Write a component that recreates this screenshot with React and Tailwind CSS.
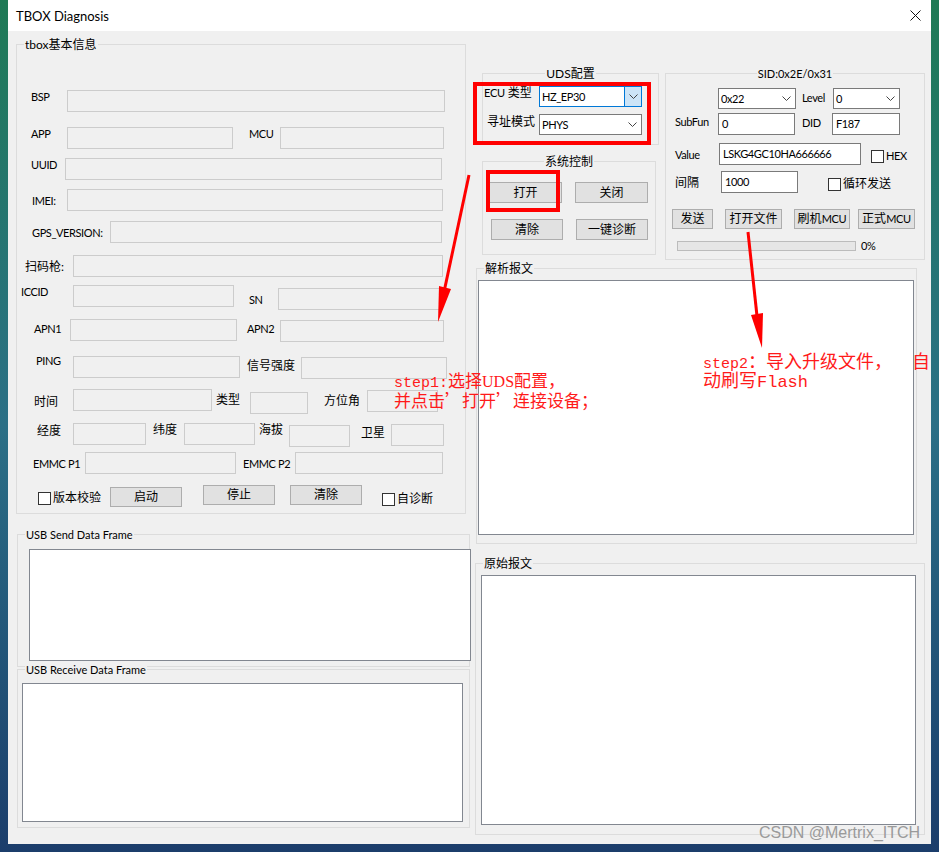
import React from 'react';

// latin text in the dialog is narrower than Lato at 12px
const EN = 'text-[11px] tracking-[-0.4px]';

const Lbl = ({ className = '', en, children }) => (
  <span className={`shrink-0 whitespace-nowrap leading-[14px] ${en ? EN : ''} ${className}`}>{children}</span>
);

// disabled text box (left panel)
const Off = ({ className = '' }) => (
  <div className={`shrink-0 h-[22px] border border-[#cccccc] bg-[#f0f0f0] ${className}`} />
);

const Edit = ({ value, className = '' }) => (
  <div className={`shrink-0 h-[22px] border border-[#7a7a7a] bg-white pl-[3px] leading-[20px] whitespace-nowrap ${EN} ${className}`}>
    {value}
  </div>
);

const Btn = ({ children, className = '' }) => (
  <button className={`shrink-0 border border-[#adadad] bg-[#e1e1e1] text-[12px] text-center whitespace-nowrap ${className}`}>
    {children}
  </button>
);

const Check = ({ label, en, className = '' }) => (
  <label className={`shrink-0 flex items-center whitespace-nowrap ${className}`}>
    <span className="w-[13px] h-[13px] border border-[#333333] bg-white" />
    <span className={`ml-[2px] leading-[14px] ${en ? EN : ''}`}>{label}</span>
  </label>
);

const Chevron = () => (
  <svg width="9" height="5" viewBox="0 0 9 5">
    <path d="M0.5 0.5 L4.5 4.5 L8.5 0.5" fill="none" stroke="#444" strokeWidth="1" />
  </svg>
);

const Combo = ({ value, className = '', focused }) => (
  <div
    className={`shrink-0 h-[21px] flex bg-white border ${
      focused ? 'border-[#0078d7]' : 'border-[#7a7a7a]'
    } ${className}`}
  >
    <span className={`flex-1 pl-[2px] leading-[19px] whitespace-nowrap ${EN}`}>{value}</span>
    <span
      className={`w-[17px] flex items-center justify-center ${
        focused ? 'bg-[#cce4f7] border-l border-[#0078d7]' : ''
      }`}
    >
      <Chevron />
    </span>
  </div>
);

const Group = ({ title, center, en, className = '', children }) => (
  <div className={`shrink-0 border border-[#dcdcdc] ${className}`}>
    <div className={`flex h-[15px] -mt-[8px] ${center ? 'justify-center' : 'pl-[7px]'}`}>
      <span className={`bg-[#f0f0f0] px-[1px] leading-[15px] whitespace-nowrap ${en ? 'text-[11px]' : ''}`}>{title}</span>
    </div>
    {children}
  </div>
);

const Row = ({ className = '', children }) => (
  <div className={`flex items-start h-[22px] ${className}`}>{children}</div>
);

const TboxInfo = () => (
  <Group title="tbox基本信息" className="ml-[8px] mt-[13px] w-[450px] h-[470px]">
    <Row className="mt-[38px]">
      <Lbl en className="ml-[14px] w-[36px]">BSP</Lbl>
      <Off className="w-[378px]" />
    </Row>
    <Row className="mt-[15px]">
      <Lbl en className="ml-[14px] w-[36px]">APP</Lbl>
      <Off className="w-[166px]" />
      <Lbl en className="ml-[16px] w-[31px]">MCU</Lbl>
      <Off className="w-[164px]" />
    </Row>
    <Row className="mt-[9px]">
      <Lbl en className="ml-[14px] w-[34px]">UUID</Lbl>
      <Off className="w-[377px]" />
    </Row>
    <Row className="mt-[9px]">
      <Lbl en className="ml-[15px] w-[35px] mt-[5px]">IMEI:</Lbl>
      <Off className="w-[376px]" />
    </Row>
    <Row className="mt-[10px]">
      <Lbl en className="ml-[15px] w-[78px] mt-[5px]">GPS_VERSION:</Lbl>
      <Off className="w-[332px]" />
    </Row>
    <Row className="mt-[12px]">
      <Lbl className="ml-[8px] w-[48px] mt-[5px]">扫码枪:</Lbl>
      <Off className="w-[370px]" />
    </Row>
    <Row className="mt-[8px]">
      <Lbl en className="ml-[4px] w-[52px]">ICCID</Lbl>
      <Off className="w-[161px]" />
      <Lbl en className="ml-[15px] w-[29px] mt-[8px]">SN</Lbl>
      <Off className="w-[164px] mt-[3px]" />
    </Row>
    <Row className="mt-[12px]">
      <Lbl en className="ml-[17px] w-[36px] mt-[3px]">APN1</Lbl>
      <Off className="w-[167px]" />
      <Lbl en className="ml-[10px] w-[33px] mt-[3px]">APN2</Lbl>
      <Off className="w-[164px] mt-[1px]" />
    </Row>
    <Row className="mt-[13px]">
      <Lbl en className="ml-[19px] w-[37px]">PING</Lbl>
      <Off className="w-[167px] mt-[2px]" />
      <Lbl className="ml-[7px] w-[54px] mt-[5px]">信号强度</Lbl>
      <Off className="w-[146px] mt-[3px]" />
    </Row>
    <Row className="mt-[13px]">
      <Lbl className="ml-[17px] w-[39px] mt-[6px]">时间</Lbl>
      <Off className="w-[139px]" />
      <Lbl className="ml-[4px] w-[34px] mt-[4px]">类型</Lbl>
      <Off className="w-[58px] mt-[3px]" />
      <Lbl className="ml-[16px] w-[43px] mt-[5px]">方位角</Lbl>
      <Off className="w-[71px] mt-[1px]" />
    </Row>
    <Row className="mt-[12px]">
      <Lbl className="ml-[20px] w-[36px] mt-[1px]">经度</Lbl>
      <Off className="w-[73px]" />
      <Lbl className="ml-[7px] w-[31px]">纬度</Lbl>
      <Off className="w-[71px]" />
      <Lbl className="ml-[4px] w-[30px]">海拔</Lbl>
      <Off className="w-[61px] mt-[2px]" />
      <Lbl className="ml-[11px] w-[30px] mt-[3px]">卫星</Lbl>
      <Off className="w-[53px] mt-[1px]" />
    </Row>
    <Row className="mt-[7px]">
      <Lbl en className="ml-[16px] w-[52px] mt-[5px]">EMMC P1</Lbl>
      <Off className="w-[151px]" />
      <Lbl en className="ml-[7px] w-[52px] mt-[5px]">EMMC P2</Lbl>
      <Off className="w-[148px]" />
    </Row>
    <Row className="mt-[11px]">
      <Check label="版本校验" className="ml-[21px] mt-[6px] w-[72px]" />
      <Btn className="w-[72px] h-[20px] mt-[2px] leading-[18px]">启动</Btn>
      <Btn className="ml-[21px] w-[72px] h-[20px] leading-[18px]">停止</Btn>
      <Btn className="ml-[15px] w-[72px] h-[20px] leading-[18px]">清除</Btn>
      <Check label="自诊断" className="ml-[20px] mt-[7px]" />
    </Row>
  </Group>
);

const SidPanel = () => (
  <Group title="SID:0x2E/0x31" center en className="ml-[6px] mt-[42px] w-[260px] h-[187px]">
    <div className="flex items-start mt-[7px] h-[21px]">
      <Combo value="0x22" className="ml-[52px] w-[78px]" />
      <Lbl en className="ml-[6px] w-[31px] mt-[3px]">Level</Lbl>
      <Combo value="0" className="w-[67px]" />
    </div>
    <Row className="mt-[4px]">
      <Lbl en className="ml-[9px] w-[43px] mt-[2px]">SubFun</Lbl>
      <Edit value="0" className="w-[77px]" />
      <Lbl en className="ml-[7px] w-[30px] mt-[3px]">DID</Lbl>
      <Edit value="F187" className="w-[68px]" />
    </Row>
    <Row className="mt-[8px]">
      <Lbl en className="ml-[9px] w-[44px] mt-[5px]">Value</Lbl>
      <Edit value="LSKG4GC10HA666666" className="w-[142px]" />
      <Check label="HEX" en className="ml-[10px] mt-[6px]" />
    </Row>
    <Row className="mt-[6px]">
      <Lbl className="ml-[9px] w-[46px] mt-[5px]">间隔</Lbl>
      <Edit value="1000" className="w-[77px]" />
      <Check label="循环发送" className="ml-[30px] mt-[6px]" />
    </Row>
    <div className="flex items-start mt-[16px] h-[20px]">
      <Btn className="ml-[6px] w-[41px] h-[20px] leading-[18px]">发送</Btn>
      <Btn className="ml-[12px] w-[57px] h-[20px] leading-[18px]">打开文件</Btn>
      <Btn className="ml-[12px] w-[56px] h-[20px] leading-[18px]">
        刷机<span className="text-[11px] tracking-[-0.3px]">MCU</span>
      </Btn>
      <Btn className="ml-[8px] w-[57px] h-[20px] leading-[18px]">
        正式<span className="text-[11px] tracking-[-0.3px]">MCU</span>
      </Btn>
    </div>
    <div className="flex items-center mt-[12px] h-[10px]">
      <div className="ml-[11px] w-[179px] h-[10px] border border-[#bcbcbc] bg-[#e6e6e6]" />
      <span className={`ml-[5px] leading-[10px] ${EN}`}>0%</span>
    </div>
  </Group>
);

export default function App() {
  return (
    <div className="relative w-[939px] h-[852px] overflow-hidden bg-linear-to-b from-[#1f7a55] via-[#2b6f86] to-[#1b3d6b]">
      <div className="ml-[8px] w-[923px] h-[844px] flex flex-col bg-[#f0f0f0] text-[12px] text-black font-['Lato','Noto_Sans_CJK_SC',sans-serif]">
        {/* title bar */}
        <div className="h-[31px] shrink-0 bg-white flex items-center justify-between pl-[8px] pr-[10px]">
          <span className="text-[13px] leading-[16px]">TBOX Diagnosis</span>
          <svg width="11" height="11" viewBox="0 0 11 11">
            <path d="M0.5 0.5 L10.5 10.5 M10.5 0.5 L0.5 10.5" stroke="#111" strokeWidth="1" />
          </svg>
        </div>

        <div className="flex-1 flex">
          {/* left column */}
          <div className="w-[463px] shrink-0 flex flex-col">
            <TboxInfo />
            <Group title="USB Send Data Frame" en className="ml-[9px] mt-[20px] w-[453px] h-[133px]">
              <div className="ml-[11px] mt-[7px] w-[442px] h-[112px] bg-white border border-[#828790]" />
            </Group>
            <Group title="USB Receive Data Frame" en className="ml-[9px] mt-[2px] w-[453px] h-[159px]">
              <div className="ml-[4px] mt-[6px] w-[441px] h-[139px] bg-white border border-[#828790]" />
            </Group>
          </div>

          {/* right column */}
          <div className="flex flex-col">
            <div className="flex items-start">
              <div className="ml-[11px] flex flex-col">
                <Group title="UDS配置" center className="mt-[42px] w-[177px] h-[72px]">
                  <div className="flex items-start mt-[5px] h-[21px]">
                    <Lbl className="ml-[1px] w-[55px]">
                      <span className="text-[11px] tracking-[-0.3px]">ECU</span> 类型
                    </Lbl>
                    <Combo value="HZ_EP30" focused className="w-[103px]" />
                  </div>
                  <div className="flex items-start mt-[7px] h-[21px]">
                    <Lbl className="ml-[4px] w-[52px] mt-[1px]">寻址模式</Lbl>
                    <Combo value="PHYS" className="w-[103px]" />
                  </div>
                </Group>
                <Group title="系统控制" center className="mt-[16px] w-[174px] h-[94px]">
                  <div className="flex mt-[13px]">
                    <Btn className="ml-[6px] w-[73px] h-[21px] leading-[19px]">打开</Btn>
                    <Btn className="ml-[13px] w-[73px] h-[21px] leading-[19px]">关闭</Btn>
                  </div>
                  <div className="flex mt-[16px]">
                    <Btn className="ml-[8px] w-[72px] h-[21px] leading-[19px]">清除</Btn>
                    <Btn className="ml-[13px] w-[72px] h-[21px] leading-[19px]">一键诊断</Btn>
                  </div>
                </Group>
              </div>
              <SidPanel />
            </div>

            <Group title="解析报文" className="ml-[5px] mt-[8px] w-[441px] h-[276px]">
              <div className="ml-[1px] mt-[4px] w-[436px] h-[255px] bg-white border border-[#828790]" />
            </Group>
            <Group title="原始报文" className="ml-[4px] mt-[19px] w-[450px] h-[272px]">
              <div className="ml-[5px] mt-[4px] w-[435px] h-[250px] bg-white border border-[#828790]" />
            </Group>
          </div>
        </div>
      </div>

      {/* annotations drawn over the screenshot */}
      <div className="absolute left-[473px] top-[82px] w-[178px] h-[63px] border-[4px] border-[#ff0000]" />
      <div className="absolute left-[486px] top-[170px] w-[74px] h-[42px] border-[4px] border-[#ff0000]" />

      <svg className="absolute left-0 top-0 pointer-events-none" width="939" height="852" viewBox="0 0 939 852">
        <line x1="469" y1="175" x2="444" y2="292" stroke="#ff0000" strokeWidth="3" />
        <polygon points="439,286 451,289 438,322" fill="#ff0000" />
        <line x1="748" y1="232" x2="757" y2="316" stroke="#ff0000" strokeWidth="3" />
        <polygon points="751,315 763,313 762,348" fill="#ff0000" />
      </svg>

      <div className="absolute left-[394px] top-[370px] text-[17px] text-[#ff1a1a] whitespace-nowrap font-['Noto_Sans_CJK_SC',sans-serif]">
        <div className="h-[20px] leading-[20px]">
          <span className="text-[15px] font-['Liberation_Mono',monospace]">step1:</span>选择
          <span className="text-[16px] font-['Liberation_Serif',serif]">UDS</span>配置，
        </div>
        <div className="h-[20px] leading-[20px]">并点击’打开’连接设备；</div>
      </div>

      <div className="absolute left-[703px] top-[351px] text-[18px] text-[#ff1a1a] whitespace-nowrap font-['Noto_Sans_CJK_SC',sans-serif]">
        <div className="h-[19px] leading-[19px]">
          <span className="text-[15px] font-['Liberation_Mono',monospace]">step2</span>：导入升级文件，
          <span className="ml-[20px]">自</span>
        </div>
        <div className="h-[19px] leading-[19px]">
          动刷写<span className="text-[17px] font-['Liberation_Mono',monospace]">Flash</span>
        </div>
      </div>

      <div className="absolute left-[759px] top-[824px] text-[16px] leading-[18px] text-[#9a9a9a] font-['Liberation_Sans',sans-serif]">
        CSDN @Mertrix_ITCH
      </div>
    </div>
  );
}
